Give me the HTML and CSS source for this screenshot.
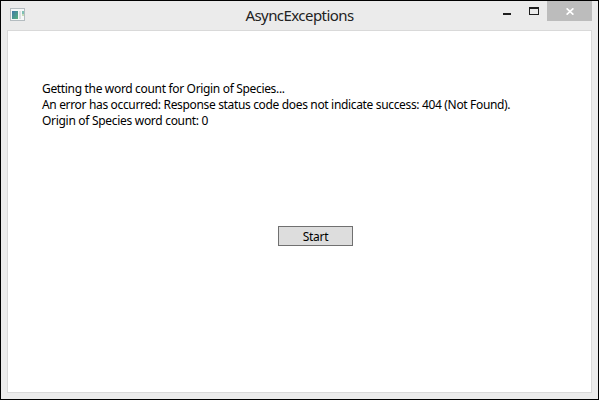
FILE: index.html
```html
<!DOCTYPE html>
<html lang="en">
<head>
<meta charset="utf-8">
<title>AsyncExceptions</title>
<link rel="stylesheet" href="styles.css">
</head>
<body>
<div class="window">
  <header class="titlebar">
    <svg class="app-icon" width="16" height="13" viewBox="0 0 16 13" shape-rendering="crispEdges">
      <defs>
        <linearGradient id="pane" x1="0" y1="0" x2="1" y2="1">
          <stop offset="0" stop-color="#3f78a8"/>
          <stop offset="1" stop-color="#58b27c"/>
        </linearGradient>
      </defs>
      <rect width="15" height="13" fill="#b4bcc0"/>
      <rect x="1" y="1" width="13" height="11" fill="#f6f8f8"/>
      <rect x="2" y="3" width="6" height="8" fill="url(#pane)"/>
      <rect x="9" y="3" width="2" height="8" fill="#dde0e2"/>
      <rect x="12" y="3" width="2" height="3" fill="#7fc0b4"/>
      <rect x="12" y="6" width="2" height="2" fill="#c4dcb8"/>
    </svg>
    <h1 class="title">AsyncExceptions</h1>
    <div class="controls">
      <svg class="minimize" width="8" height="2"><rect width="8" height="2" fill="#1e1e1e"/></svg>
      <svg class="maximize" width="10" height="8" shape-rendering="crispEdges"><path d="M0 0h10v8H0zM1 2v5h8V2z" fill="#1e1e1e" fill-rule="evenodd"/></svg>
      <div class="close"><svg width="8" height="7" viewBox="0 0 8 7"><path d="M.6.3 7.4 6.7M7.4.3.6 6.7" stroke="#fff" stroke-width="1.6"/></svg></div>
    </div>
  </header>
  <main class="client">
    <div class="output">
      <p class="line-first">Getting the word count for Origin of Species...</p>
      <p class="line-error">An error has occurred: Response status code does not indicate success: 404 (Not Found).</p>
      <p class="line-count">Origin of Species word count: 0</p>
    </div>
    <button class="start">Start</button>
  </main>
</div>
</body>
</html>
```
FILE: styles.css
```css
* { box-sizing: border-box; margin: 0; padding: 0; }
body { font-family: "Noto Sans", "Open Sans", sans-serif; color: #000; }
.window {
  width: 599px;
  height: 400px;
  border: 1px solid #000;
  background: #ebebeb;
  padding: 0 6px 6px;
  display: flex;
  flex-direction: column;
}
.titlebar {
  height: 29px;
  flex: none;
  display: grid;
  grid-template-columns: 120px 1fr 120px;
}
.app-icon { margin: 7px 0 0 3px; }
.title {
  font-size: 15px;
  font-weight: 400;
  line-height: 29px;
  letter-spacing: -0.56px;
  color: #222;
  text-align: center;
  white-space: nowrap;
}
.controls { display: flex; justify-content: flex-end; align-items: flex-start; }
.minimize { margin: 12px 18px 0 0; }
.maximize { margin: 6px 8px 0 0; }
.close {
  width: 45px;
  height: 20px;
  background: #bcbcbc;
  display: flex;
  align-items: center;
  justify-content: center;
}
.client {
  flex: 1;
  border: 1px solid #d9d9d9;
  background: #fff;
  padding: 50px 34px 0;
}
.output { font-size: 12px; line-height: 16px; letter-spacing: -0.34px; white-space: nowrap; }
.line-first { letter-spacing: -0.33px; }
.line-count { letter-spacing: -0.3px; }
.start {
  display: block;
  width: 75px;
  height: 20px;
  margin: 97px 0 0 236px;
  padding-top: 1px;
  border: 1px solid #707070;
  background: #ddd;
  font: 12px/17px "Noto Sans", "Open Sans", sans-serif;
  letter-spacing: -0.3px;
  color: #000;
}
```
